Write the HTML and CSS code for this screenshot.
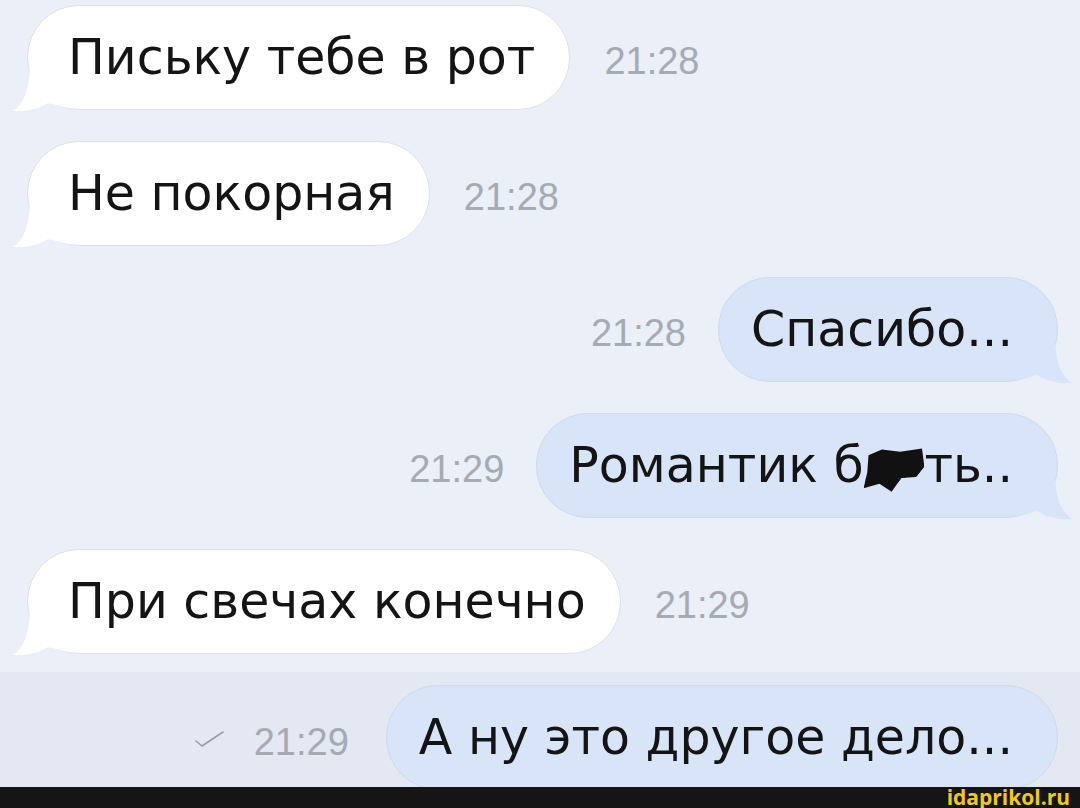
FILE: index.html
```html
<!DOCTYPE html>
<html lang="ru">
<head>
    <meta charset="UTF-8">
    <title>Переписка</title>
    <link rel="stylesheet" href="styles.css">
</head>
<body>
    <div class="screen">
        <div class="chat">
            <div class="row in">
                <div class="bubble">
                    <svg class="tail" width="56" height="50" viewBox="0 0 56 50"><path d="M18 0 C18 24 13 40 1 48 C14 49 27 46 36 40 L56 45 L56 0 Z"/></svg>
                    Письку тебе в рот
                </div>
                <span class="time">21:28</span>
            </div>
            <div class="row in">
                <div class="bubble">
                    <svg class="tail" width="56" height="50" viewBox="0 0 56 50"><path d="M18 0 C18 24 13 40 1 48 C14 49 27 46 36 40 L56 45 L56 0 Z"/></svg>
                    Не покорная
                </div>
                <span class="time">21:28</span>
            </div>
            <div class="row out">
                <span class="time">21:28</span>
                <div class="bubble">
                    <svg class="tail" width="56" height="50" viewBox="0 0 56 50"><path d="M18 0 C18 24 13 40 1 48 C14 49 27 46 36 40 L56 45 L56 0 Z"/></svg>
                    Спасибо...
                </div>
            </div>
            <div class="row out">
                <span class="time">21:29</span>
                <div class="bubble">
                    <svg class="tail" width="56" height="50" viewBox="0 0 56 50"><path d="M18 0 C18 24 13 40 1 48 C14 49 27 46 36 40 L56 45 L56 0 Z"/></svg>
                    <span>Романтик б<span class="blot">ля</span>ть..</span>
                </div>
            </div>
            <div class="row in">
                <div class="bubble">
                    <svg class="tail" width="56" height="50" viewBox="0 0 56 50"><path d="M18 0 C18 24 13 40 1 48 C14 49 27 46 36 40 L56 45 L56 0 Z"/></svg>
                    При свечах конечно
                </div>
                <span class="time">21:29</span>
            </div>
            <div class="row out last">
                <svg class="check" width="32" height="18" viewBox="0 0 32 18">
                    <path d="M2 11 L8 16 L29 2" fill="none" stroke="#9a9ea6" stroke-width="1.6" stroke-linecap="round" stroke-linejoin="round"/>
                </svg>
                <span class="time">21:29</span>
                <div class="bubble">А ну это другое дело...</div>
            </div>
        </div>
        <div class="footer">idaprikol.ru</div>
    </div>
</body>
</html>
```

FILE: styles.css
```css
body {
    margin: 0;
    background-color: #eaeff8;
    font-family: "Liberation Sans", Arial, sans-serif;
}

.screen {
    width: 1080px;
    height: 808px;
    display: flex;
    flex-direction: column;
    overflow: hidden;
}

.chat {
    flex: 1;
    overflow: hidden;
    padding-top: 5px;
    display: flex;
    flex-direction: column;
}

.row {
    display: flex;
    align-items: center;
    margin-top: 31px;
    padding: 0 22px 0 27px;
    flex-shrink: 0;
}

.row:first-child {
    margin-top: 0;
}

.row.out {
    justify-content: flex-end;
}

.row.last {
    margin-top: 18px;
    padding-top: 13px;
    background-color: #e3e8f2;
    align-items: flex-start;
    flex: 1;
}

.bubble {
    position: relative;
    height: 105px;
    box-sizing: border-box;
    padding: 0 34px 0 40px;
    display: flex;
    align-items: center;
    border-radius: 52px;
    font-family: "DejaVu Sans", "Liberation Sans", sans-serif;
    font-size: 49px;
    color: #141414;
    background-color: #fff;
    border: 1px solid #dde1e8;
    white-space: nowrap;
}

.out .bubble {
    background-color: #d8e5f8;
    border-color: #cfdaea;
    padding: 0 44px 0 32px;
}

/* tails */
.tail {
    position: absolute;
    left: -16px;
    bottom: -4px;
    fill: #fff;
}

.out .tail {
    left: auto;
    right: -16px;
    transform: scaleX(-1);
    fill: #d8e5f8;
}

.time {
    font-size: 38px;
    color: #a6aab2;
    margin: 0 34px;
    padding-top: 8px;
}

.out .time {
    margin: 0 32px 0 0;
}

.check {
    margin: 45px 28px 0 0;
}

.last .time {
    margin-top: 28px;
    margin-right: 37px;
}

.blot {
    display: inline-block;
    background-color: #111;
    color: #111;
    clip-path: polygon(8% 32%, 30% 22%, 60% 26%, 96% 20%, 100% 52%, 86% 70%, 62% 72%, 46% 96%, 26% 82%, 0% 90%, 6% 62%);
}

.footer {
    height: 21px;
    background-color: #151515;
    color: #f2c81a;
    font-family: "Open Sans", "Liberation Sans", sans-serif;
    font-weight: bold;
    font-size: 21px;
    line-height: 21px;
    text-align: right;
    padding-right: 10px;
    flex-shrink: 0;
}
```
